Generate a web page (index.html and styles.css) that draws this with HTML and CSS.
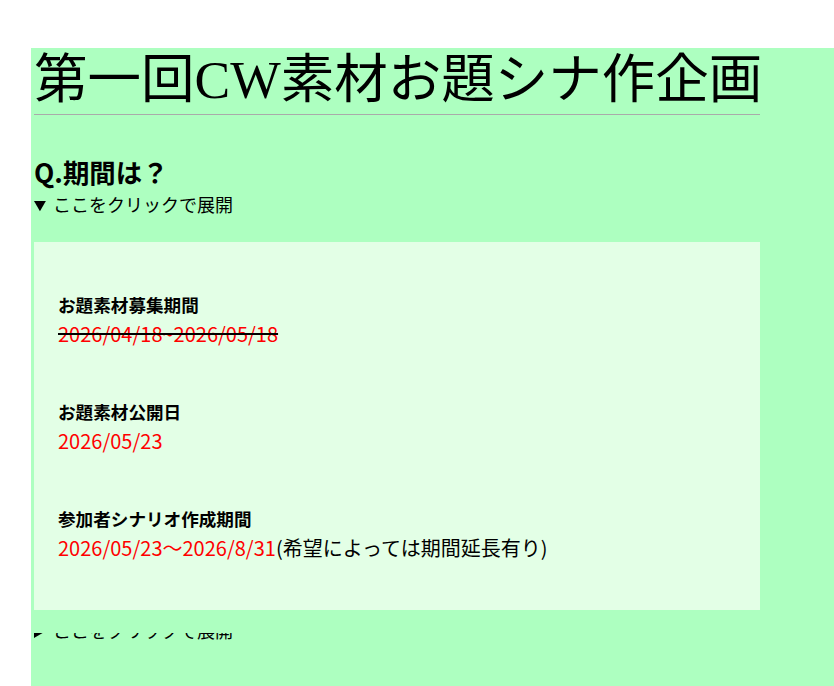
FILE: index.html
```html
<!DOCTYPE html>
<html lang="ja">
<head>
    <meta charset="UTF-8">
    <meta name="viewport" content="width=device-width, initial-scale=1.0">
    <title>第一回CW素材お題シナ作企画</title>
    <link rel="stylesheet" href="styles.css">
</head>
<body>
    <div class="page">
        <div class="column">
            <h1 class="title">第一回CW素材お題シナ作企画</h1>

            <h2 class="question">Q.期間は？</h2>
            <details class="faq" open>
                <summary>ここをクリックで展開</summary>
                <div class="answer">
                    <div class="item">
                        <div class="label">お題素材募集期間</div>
                        <div class="value"><s>2026/04/18~2026/05/18</s></div>
                    </div>
                    <div class="item">
                        <div class="label">お題素材公開日</div>
                        <div class="value">2026/05/23</div>
                    </div>
                    <div class="item">
                        <div class="label">参加者シナリオ作成期間</div>
                        <div class="value">2026/05/23〜2026/8/31<span class="note">(希望によっては期間延長有り)</span></div>
                    </div>
                </div>
            </details>

            <div class="peek">
                <details class="faq">
                    <summary>ここをクリックで展開</summary>
                </details>
            </div>
        </div>
    </div>
</body>
</html>
```

FILE: styles.css
```css
* {
    margin: 0;
    padding: 0;
    box-sizing: border-box;
}

html,
body {
    height: 100%;
    overflow: hidden;
}

body {
    background-color: #fff;
    color: #000;
    font-family: 'Noto Sans CJK JP', 'Noto Sans', sans-serif;
    font-size: 17.6px;
}

.page {
    margin: 48px 0 0 31px;
    padding: 0 3px;
    min-height: 700px;
    background-color: #adffc0;
}

.column {
    width: 726px;
}

.title {
    font-family: 'Liberation Serif', 'Noto Sans CJK JP', serif;
    font-size: 53.5px;
    font-weight: normal;
    line-height: 64px;
    white-space: nowrap;
    padding-bottom: 2px;
    border-bottom: 1px solid #aaa;
}

.question {
    font-size: 1.5em;
    font-weight: bold;
    margin-top: 41px;
    line-height: 32px;
}

.faq summary {
    font-size: 18px;
    line-height: 26px;
    cursor: pointer;
}

.question + .faq {
    margin-top: 3px;
}

/* opened panel of the first question */
.answer {
    margin-top: 25px;
    padding: 50px 24px 48px;
    background-color: #e3ffe6;
}

.item + .item {
    margin-top: 51px;
}

.label {
    font-weight: bold;
    line-height: 26px;
}

.value {
    font-size: 20px;
    line-height: 28px;
    margin-top: 2px;
    color: #f00;
}

.value s {
    text-decoration-color: #000;
}

.note {
    color: #000;
}

/* next question's toggle, mostly hidden under the panel */
.peek {
    height: 10px;
    margin-top: 23px;
    overflow: hidden;
    display: flex;
    align-items: flex-end;
}
```
